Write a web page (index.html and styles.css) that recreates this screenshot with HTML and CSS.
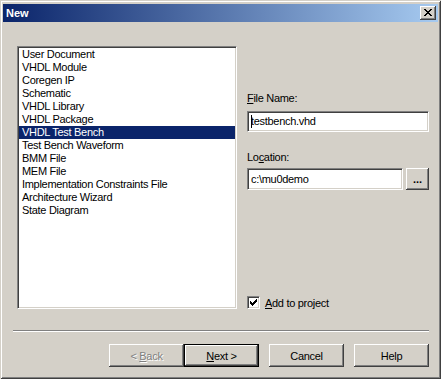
FILE: index.html
```html
<!DOCTYPE html>
<html lang="en">
<head>
    <meta charset="UTF-8">
    <meta name="viewport" content="width=device-width, initial-scale=1.0">
    <title>New</title>
    <link rel="stylesheet" href="styles.css">
</head>
<body>
    <div class="window">
        <div class="titlebar">
            <span class="title">New</span>
            <button class="close-btn" aria-label="Close">
                <svg width="8" height="7" viewBox="0 0 8 7" shape-rendering="crispEdges"><path d="M0 0h2v1h-2zM6 0h2v1h-2zM1 1h2v1h-2zM5 1h2v1h-2zM2 2h4v1h-4zM3 3h2v1h-2zM2 4h4v1h-4zM1 5h2v1h-2zM5 5h2v1h-2zM0 6h2v1h-2zM6 6h2v1h-2z" fill="#000"/></svg>
            </button>
        </div>

        <div class="main">
            <ul class="list">
                <li>User Document</li>
                <li>VHDL Module</li>
                <li>Coregen IP</li>
                <li>Schematic</li>
                <li>VHDL Library</li>
                <li>VHDL Package</li>
                <li class="selected">VHDL Test Bench</li>
                <li>Test Bench Waveform</li>
                <li>BMM File</li>
                <li>MEM File</li>
                <li>Implementation Constraints File</li>
                <li>Architecture Wizard</li>
                <li>State Diagram</li>
            </ul>

            <div class="form">
                <label class="label label-name"><u>F</u>ile Name:</label>
                <div class="field field-name"><span class="caret"></span>testbench.vhd</div>

                <label class="label label-loc">Lo<u>c</u>ation:</label>
                <div class="loc-row">
                    <div class="field field-loc">c:\mu0demo</div>
                    <button class="btn browse">...</button>
                </div>

                <div class="check-row">
                    <span class="checkbox">
                        <svg width="7" height="7" viewBox="0 0 7 7" shape-rendering="crispEdges"><path d="M6 0h1v3h-1zM5 1h1v3h-1zM4 2h1v3h-1zM3 3h1v3h-1zM2 4h1v3h-1zM1 3h1v3h-1zM0 2h1v3h-1z" fill="#000"/></svg>
                    </span>
                    <span><u>A</u>dd to project</span>
                </div>
            </div>
        </div>

        <div class="separator"></div>

        <div class="buttons">
            <button class="btn disabled">&lt; <u>B</u>ack</button>
            <button class="btn default"><u>N</u>ext &gt;</button>
            <button class="btn spaced">Cancel</button>
            <button class="btn spaced">Help</button>
        </div>
    </div>
</body>
</html>
```

FILE: styles.css
```css
body {
    margin: 0;
    background-color: #d4d0c8;
    font-family: 'Liberation Sans', Arial, sans-serif;
    font-size: 11px;
    letter-spacing: -0.3px;
    color: #000;
}
.window {
    width: 441px;
    height: 379px;
    box-sizing: border-box;
    padding: 4px 3px 3px 3px;
    background-color: #d4d0c8;
    box-shadow: inset 1px 1px #d4d0c8, inset -1px -1px #404040, inset 2px 2px #fff, inset -2px -2px #808080;
}
.titlebar {
    height: 18px;
    display: flex;
    align-items: center;
    justify-content: space-between;
    background: linear-gradient(to right, #0a246a, #a6caf0);
}
.title {
    color: white;
    font-weight: bold;
    letter-spacing: 0;
    padding-left: 3px;
}
.close-btn {
    width: 16px;
    height: 14px;
    margin-right: 2px;
    padding: 0;
    border: none;
    background-color: #d4d0c8;
    box-shadow: inset -1px -1px #404040, inset 1px 1px #fff, inset -2px -2px #808080;
    display: flex;
    align-items: center;
    justify-content: center;
}
.close-btn svg {
    margin: 0 1px 1px 0;
}
.main {
    display: flex;
    padding: 24px 0 0 14px;
}
.list {
    width: 220px;
    height: 263px;
    box-sizing: border-box;
    margin: 0;
    list-style: none;
    background-color: white;
    border: 1px solid;
    border-color: #808080 #fff #fff #808080;
    box-shadow: inset 1px 1px #404040, inset -1px -1px #d4d0c8;
    padding: 1px;
}
.list li {
    height: 13px;
    line-height: 13px;
    padding-left: 3px;
    white-space: nowrap;
}
.list li.selected {
    background-color: #0a246a;
    color: white;
}
.form {
    width: 182px;
    height: 263px;
    margin-left: 10px;
    display: flex;
    flex-direction: column;
}
.label {
    display: block;
    line-height: 13px;
}
.label-name {
    margin-top: 46px;
}
.label-loc {
    margin-top: 19px;
}
.field {
    height: 21px;
    box-sizing: border-box;
    background-color: white;
    border: 1px solid;
    border-color: #808080 #fff #fff #808080;
    box-shadow: inset 1px 1px #404040, inset -1px -1px #d4d0c8;
    padding: 0 3px;
    line-height: 19px;
    white-space: nowrap;
}
.field-name {
    margin-top: 6px;
    display: flex;
    align-items: center;
}
.caret {
    width: 1px;
    height: 13px;
    background-color: #000;
    margin-right: -1px;
}
.loc-row {
    display: flex;
    margin-top: 4px;
}
.field-loc {
    flex: 1;
    height: 22px;
    line-height: 20px;
}
.btn {
    font-family: inherit;
    font-size: 11px;
    letter-spacing: -0.3px;
    color: #000;
    height: 23px;
    width: 75px;
    padding: 0;
    border: none;
    background-color: #d4d0c8;
    box-shadow: inset -1px -1px #404040, inset 1px 1px #fff, inset -2px -2px #808080, inset 2px 2px #d4d0c8;
}
.browse {
    width: 23px;
    height: 22px;
    margin-left: 3px;
    font-weight: bold;
    letter-spacing: 0;
    line-height: 14px;
}
.check-row {
    margin-top: auto;
    display: flex;
    align-items: center;
    height: 13px;
}
.checkbox {
    width: 13px;
    height: 13px;
    box-sizing: border-box;
    margin-right: 5px;
    background-color: white;
    border: 1px solid;
    border-color: #808080 #fff #fff #808080;
    box-shadow: inset 1px 1px #404040, inset -1px -1px #d4d0c8;
    display: flex;
    align-items: center;
    justify-content: center;
}
.separator {
    margin: 21px 9px 0 10px;
    border-top: 1px solid #808080;
    border-bottom: 1px solid #fff;
}
.buttons {
    display: flex;
    justify-content: flex-end;
    margin-top: 12px;
    padding-right: 9px;
}
.btn.disabled {
    color: #808080;
    text-shadow: 1px 1px #fff;
}
.btn.default {
    box-shadow: inset 0 0 0 1px #000, inset -2px -2px #404040, inset 2px 2px #fff, inset -3px -3px #808080;
}
.btn.spaced {
    margin-left: 10px;
}
```
